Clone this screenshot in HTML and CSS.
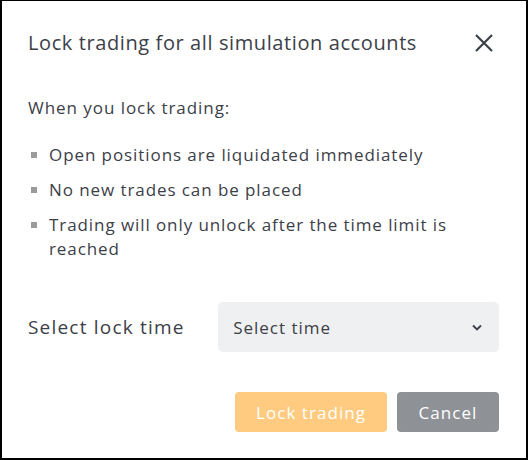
FILE: index.html
```html
<!DOCTYPE html>
<html>
<head>
<meta charset="utf-8">
<link rel="stylesheet" href="styles.css">
</head>
<body>
<div class="dialog">
  <div class="header">
    <h1 class="title">Lock trading for all simulation accounts</h1>
    <button class="close" aria-label="Close">
      <svg width="18" height="18" viewBox="0 0 18 18"><path d="M1 1L17 17M17 1L1 17" stroke="#3c4048" stroke-width="2.2" fill="none"/></svg>
    </button>
  </div>
  <p class="intro">When you lock trading:</p>
  <ul class="list">
    <li>Open positions are liquidated immediately</li>
    <li>No new trades can be placed</li>
    <li>Trading will only unlock after the time limit is reached</li>
  </ul>
  <div class="select-row">
    <span class="label">Select lock time</span>
    <div class="select">
      <span>Select time</span>
      <svg width="10" height="7" viewBox="0 0 10 7"><path d="M1 1.5L5 5.5L9 1.5" stroke="#3c4048" stroke-width="1.9" fill="none"/></svg>
    </div>
  </div>
  <div class="actions">
    <button class="btn btn-lock">Lock trading</button>
    <button class="btn btn-cancel">Cancel</button>
  </div>
</div>
</body>
</html>
```
FILE: styles.css
```css
* { box-sizing: border-box; }
html, body { margin: 0; padding: 0; background: #fff; }
body { font-family: "Open Sans", "DejaVu Sans", sans-serif; color: #3c4048; }
.dialog {
  width: 528px;
  height: 460px;
  border: 2px solid #000;
  border-top-width: 1px;
  padding: 0 27px 0 26px;
  display: flex;
  flex-direction: column;
}
.header {
  height: 84px;
  display: flex;
  align-items: center;
  justify-content: space-between;
}
.title {
  margin: 0;
  font-size: 20px;
  font-weight: 400;
  line-height: 24px;
  letter-spacing: 0.6px;
}
.close {
  border: 0;
  background: none;
  padding: 0;
  width: 18px;
  height: 18px;
  margin-right: 6px;
  display: flex;
}
.intro {
  margin: 11px 0 0 0;
  font-size: 17px;
  line-height: 24px;
  letter-spacing: 0.95px;
}
.list {
  list-style: none;
  margin: 23px 0 0 0;
  padding: 0;
  display: flex;
  flex-direction: column;
  gap: 11px;
}
.list li {
  position: relative;
  padding-left: 21px;
  font-size: 17px;
  line-height: 24px;
  letter-spacing: 0.92px;
}
.list li::before {
  content: "";
  position: absolute;
  left: 3px;
  top: 9px;
  width: 6px;
  height: 6px;
  background: #9b9b9b;
}
.select-row {
  margin-top: 41px;
  display: flex;
  align-items: center;
}
.label {
  width: 191px;
  font-size: 19px;
  letter-spacing: 1.2px;
}
.select {
  width: 282px;
  height: 50px;
  background: #eff0f2;
  border-radius: 5px;
  display: flex;
  align-items: center;
  justify-content: space-between;
  padding: 0 17px 0 15px;
  font-size: 17px;
  letter-spacing: 1px;
}
.actions {
  margin-top: 40px;
  display: flex;
  justify-content: flex-end;
  gap: 10px;
}
.btn {
  height: 40px;
  border: 0;
  border-radius: 4px;
  color: #fff;
  font-family: inherit;
  font-size: 17px;
  letter-spacing: 1.05px;
}
.btn-lock { width: 152px; background: #fecb80; }
.btn-cancel { width: 102px; background: #8e9196; }
```
